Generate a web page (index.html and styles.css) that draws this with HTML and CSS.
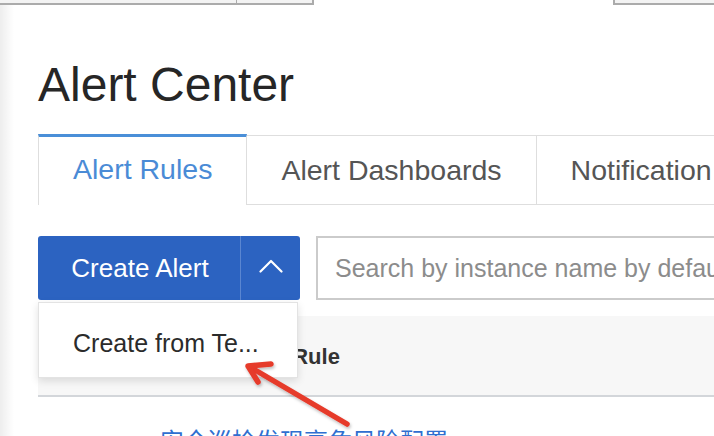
FILE: index.html
```html
<!DOCTYPE html>
<html lang="en">
<head>
<meta charset="utf-8">
<title>Alert Center</title>
<link rel="stylesheet" href="styles.css">
</head>
<body>
<div class="topstrip">
  <div class="strip-box strip-a"></div>
  <div class="strip-box strip-b"></div>
  <div class="strip-gap"></div>
  <div class="strip-box strip-c"></div>
</div>
<div class="edge-shadow"></div>
<main class="page">
  <h1 class="title">Alert Center</h1>
  <nav class="tabs">
    <div class="tab tab-active">Alert Rules</div>
    <div class="tab">Alert Dashboards</div>
    <div class="tab tab-last">Notification Policies</div>
  </nav>
  <div class="toolbar">
    <div class="split-btn">
      <span class="split-main">Create Alert</span>
      <span class="split-toggle">
        <svg width="24" height="14" viewBox="0 0 24 14"><path d="M1.5 12.5 L12 2 L22.5 12.5" fill="none" stroke="#fff" stroke-width="2.2" stroke-linecap="round" stroke-linejoin="round"/></svg>
      </span>
    </div>
    <div class="search">Search by instance name by default</div>
  </div>
  <div class="table-head">
    <div class="th th-check"></div>
    <div class="th">Alert Rule</div>
  </div>
  <div class="table-row">
    <a class="rule-link">安全巡检发现高危风险配置</a>
  </div>
  <div class="dropdown">
    <div class="dropdown-item">Create from Te...</div>
  </div>
</main>
<svg class="annotation" width="714" height="436" viewBox="0 0 714 436">
  <defs>
    <filter id="sh" x="-20%" y="-20%" width="140%" height="140%">
      <feDropShadow dx="1" dy="2" stdDeviation="1.5" flood-color="#000" flood-opacity="0.25"/>
    </filter>
  </defs>
  <g filter="url(#sh)" fill="none" stroke="#e63a2b" stroke-width="5.5" stroke-linecap="round" stroke-linejoin="round">
    <path d="M347 424 L250 367"/>
    <path d="M271 364 L248 366 L258 382"/>
  </g>
</svg>
</body>
</html>
```

FILE: styles.css
```css
html, body {
  margin: 0;
  padding: 0;
  background: #ffffff;
  width: 714px;
  height: 436px;
  overflow: hidden;
  font-family: "Liberation Sans", Arial, sans-serif;
  color: #333;
}

.topstrip {
  display: flex;
  height: 5px;
}
.strip-box {
  height: 3px;
  background: #f3f3f3;
  border-bottom: 2px solid #ababab;
}
.strip-a {
  width: 236px;
  border-right: 1px solid #ababab;
}
.strip-b {
  width: 75px;
  border-right: 2px solid #ababab;
}
.strip-gap {
  width: 299px;
}
.strip-c {
  flex: 1;
  border-left: 2px solid #ababab;
}

.edge-shadow {
  position: absolute;
  left: 0;
  top: 5px;
  width: 14px;
  height: 431px;
  background: linear-gradient(to right, rgba(0,0,0,0.07), rgba(0,0,0,0));
  pointer-events: none;
}

.page {
  position: relative;
  padding: 52px 0 0 38px;
}

.title {
  margin: 0;
  font-size: 48px;
  line-height: 56px;
  font-weight: 400;
  color: #262626;
  height: 77px;
}

.tabs {
  display: flex;
  white-space: nowrap;
}
.tab {
  box-sizing: border-box;
  padding: 0 34px;
  display: flex;
  align-items: center;
  font-size: 28.5px;
  color: #555;
  border-top: 1px solid #dedede;
  border-bottom: 1px solid #dedede;
  border-right: 1px solid #dedede;
  margin-top: 1px;
  height: 70px;
}
.tab-active {
  border-top: 3px solid #4a8fd8;
  border-left: 1px solid #dedede;
  border-bottom: none;
  color: #4a8bd6;
  margin-top: 0;
  height: 71px;
  padding-bottom: 3px;
}
.tab-last {
  border-right: none;
}

.toolbar {
  display: flex;
  gap: 16px;
  margin-top: 31px;
  height: 64px;
  white-space: nowrap;
}
.split-btn {
  display: flex;
  background: #2c63c1;
  border-radius: 3px;
  height: 64px;
  width: 262px;
  flex: none;
}
.split-main {
  width: 203px;
  display: flex;
  align-items: center;
  justify-content: center;
  font-size: 26px;
  color: #fff;
  border-right: 1px solid #5a86d1;
  padding-left: 2px;
  box-sizing: border-box;
}
.split-toggle {
  flex: 1;
  display: flex;
  align-items: center;
  justify-content: center;
  padding-bottom: 4px;
}
.search {
  flex: none;
  width: 420px;
  box-sizing: border-box;
  border: 2px solid #cbcbcb;
  height: 64px;
  display: flex;
  align-items: center;
  padding-left: 17px;
  font-size: 25px;
  color: #8c8c8c;
  overflow: hidden;
}

.table-head {
  margin-top: 16px;
  background: #f7f7f7;
  border-bottom: 2px solid #d3d6da;
  display: flex;
  align-items: center;
  padding-top: 2px;
  box-sizing: border-box;
  height: 81px;
}
.th {
  font-size: 22px;
  font-weight: 700;
  color: #333;
}
.th-check {
  width: 198px;
  flex: none;
}

.table-row {
  padding: 28px 0 0 122px;
}
.rule-link {
  font-family: "Noto Sans CJK SC", "Noto Sans", sans-serif;
  font-size: 24px;
  line-height: 30px;
  color: #2f6fd0;
}

.dropdown {
  position: absolute;
  left: 38px;
  top: 297px;
  width: 260px;
  height: 76px;
  box-sizing: border-box;
  background: #fff;
  border: 1px solid #e3e3e3;
  box-shadow: 0 3px 8px rgba(0,0,0,0.12);
  display: flex;
  align-items: center;
}
.dropdown-item {
  padding-left: 34px;
  font-size: 25px;
  color: #2b2b2b;
  padding-top: 6px;
}

.annotation {
  position: absolute;
  left: 0;
  top: 0;
  pointer-events: none;
}
```
